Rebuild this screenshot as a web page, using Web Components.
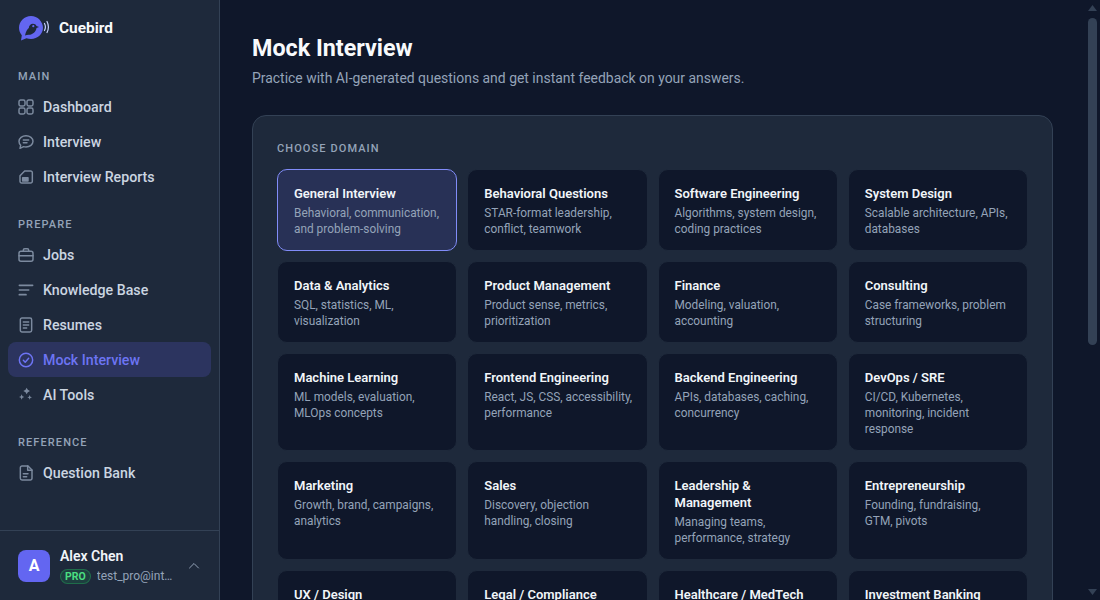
<!DOCTYPE html>
<html>
<head>
<meta charset="utf-8">
<title>Mock Interview</title>
<style>
  html, body { margin: 0; height: 100%; overflow: hidden; background: #0f172a; }
  body { font-family: Roboto, "Noto Sans", sans-serif; }
</style>
</head>
<body>
<app-shell>
  <side-bar slot="side"></side-bar>
  <mock-page slot="main"></mock-page>
  <page-scrollbar slot="bar"></page-scrollbar>
</app-shell>

<script>
const icons = {
  dashboard: '<rect x="1.500" y="1.500" width="9" height="9" rx="2.500"/><rect x="13.500" y="1.500" width="9" height="9" rx="2.500"/><rect x="1.500" y="13.500" width="9" height="9" rx="2.500"/><rect x="13.500" y="13.500" width="9" height="9" rx="2.500"/>',
  chat: '<path d="M12 2.500c5.800 0 10.500 3.800 10.500 8.500S17.800 19.500 12 19.500c-1.300 0-2.500-.2-3.600-.5L3 21.500l1-4.500C2.300 15.400 1.500 13.300 1.500 11 1.500 6.300 6.200 2.500 12 2.500z"/><path d="M8 9h8M8 13h5.500"/>',
  reports: '<path d="M10 3h9a2.500 2.500 0 0 1 2.500 2.500v13A2.500 2.500 0 0 1 19 21H5.500A2.500 2.500 0 0 1 3 18.500V10z"/><path d="M7 13h8v5H7z" fill="currentColor"/>',
  jobs: '<rect x="1.500" y="6.500" width="21" height="15" rx="3"/><path d="M8 6.500V4.500a2 2 0 0 1 2-2h4a2 2 0 0 1 2 2v2M1.500 13h21"/>',
  knowledge: '<path d="M2 5h20M2 12h14M2 19h10" stroke-width="2.500"/>',
  resumes: '<rect x="3.500" y="1.500" width="17" height="21" rx="2.500"/><path d="M8 7.500h8M8 12h8M8 16.500h5"/>',
  mock: '<circle cx="12" cy="12" r="10"/><path d="M8 12.500l2.800 2.800L16 9.500"/>',
  tools: '<path d="M13 1l1.700 3.300L18 6l-3.300 1.700L13 11l-1.700-3.300L8 6l3.300-1.700z" fill="currentColor" stroke="none"/><path d="M5.500 11l1.200 2.800 2.800 1.200-2.800 1.200L5.500 19l-1.200-2.800L1.500 15l2.800-1.200z" fill="currentColor" stroke="none"/><path d="M17.500 12l1 2.500 2.500 1-2.500 1-1 2.500-1-2.500-2.500-1 2.500-1z" fill="currentColor" stroke="none"/>',
  bank: '<path d="M3.500 4a2.500 2.500 0 0 1 2.500-2.500h9l6 6V20a2.500 2.500 0 0 1-2.500 2.500H6A2.500 2.500 0 0 1 3.500 20z"/><path d="M14.500 1.500V8H21M8 13h7M8 17.500h5"/>'
};

class AppShell extends HTMLElement {
  connectedCallback() {
    this.attachShadow({ mode: 'open' });
    this.shadowRoot.innerHTML = `
      <style>
        :host { display: flex; height: 600px; width: 1100px; }
        .side { flex: 0 0 220px; min-width: 0; height: 100%; }
        .main { flex: 1; min-width: 0; height: 100%; overflow: hidden; }
        .bar { flex: 0 0 15px; height: 100%; }
      </style>
      <div class="side"><slot name="side"></slot></div>
      <div class="main"><slot name="main"></slot></div>
      <div class="bar"><slot name="bar"></slot></div>
    `;
  }
}
customElements.define('app-shell', AppShell);

// headless browser hides real scrollbars, so this one is drawn
class PageScrollbar extends HTMLElement {
  connectedCallback() {
    this.attachShadow({ mode: 'open' });
    this.shadowRoot.innerHTML = `
      <style>
        :host { display: flex; flex-direction: column; align-items: center; height: 100%; background: #0f172a; }
        svg { width: 9px; height: 6px; flex: none; fill: #334155; }
        .up { margin-top: 5px; }
        .down { margin-bottom: 5px; margin-top: auto; }
        .thumb { width: 9px; height: 327px; margin-top: 7px; border-radius: 5px; background: #334155; }
      </style>
      <svg class="up" viewBox="0 0 9 6"><path d="M0 6h9L4.500 0z"/></svg>
      <div class="thumb"></div>
      <svg class="down" viewBox="0 0 9 6"><path d="M0 0h9L4.500 6z"/></svg>
    `;
  }
}
customElements.define('page-scrollbar', PageScrollbar);

class NavItem extends HTMLElement {
  connectedCallback() {
    const active = this.hasAttribute('active');
    const tone = active ? '#6d74f4' : '#94a3b8';
    this.attachShadow({ mode: 'open' });
    this.shadowRoot.innerHTML = `
      <style>
        :host { display: flex; align-items: center; gap: 9px; height: 35px; padding: 0 10px;
          border-radius: 8px; font-size: 14.2px; font-weight: 500; color: ${active ? '#6d74f4' : '#cbd5e1'};
          background: ${active ? 'rgba(99,102,241,.2)' : 'transparent'}; }
        svg { width: 16px; height: 16px; flex: none; fill: none; stroke: ${tone}; color: ${tone};
          opacity: ${active ? 1 : .8}; stroke-width: 2.2; stroke-linecap: round; stroke-linejoin: round; }
      </style>
      <svg viewBox="0 0 24 24">${icons[this.getAttribute('icon')]}</svg>
      <slot></slot>
    `;
  }
}
customElements.define('nav-item', NavItem);

class NavGroup extends HTMLElement {
  connectedCallback() {
    this.attachShadow({ mode: 'open' });
    this.shadowRoot.innerHTML = `
      <style>
        :host { display: block; padding: 0 8px; margin-bottom: 22px; }
        .label { font-size: 11px; font-weight: 500; letter-spacing: 1.1px; color: #94a3b8;
          padding: 1px 10px 0; height: 15px; line-height: 16px; margin-bottom: 5px; }
      </style>
      <div class="label">${this.getAttribute('label')}</div>
      <slot></slot>
    `;
  }
}
customElements.define('nav-group', NavGroup);

class UserCard extends HTMLElement {
  connectedCallback() {
    this.attachShadow({ mode: 'open' });
    this.shadowRoot.innerHTML = `
      <style>
        :host { display: flex; align-items: center; height: 70px; box-sizing: border-box; flex: none;
          border-top: 1px solid #334155; padding: 0 18px; gap: 10px; }
        .avatar { width: 32px; height: 32px; border-radius: 8px; background: #6366f1; color: #fff;
          font-weight: 700; font-size: 16px; display: flex; align-items: center; justify-content: center; flex: none; }
        .info { width: 118px; min-width: 0; }
        .name { font-size: 14px; font-weight: 600; color: #f1f5f9; line-height: 18px; }
        .meta { display: flex; align-items: center; gap: 6px; height: 16px; margin-top: 3px; }
        .pro { font-size: 10.5px; font-weight: 700; color: #4ade80; background: rgba(34,197,94,.15);
          border: 1px solid rgba(34,197,94,.35); border-radius: 8px; padding: 0 4px; line-height: 13px; flex: none; }
        .mail { font-size: 12px; color: #94a3b8; white-space: nowrap; overflow: hidden; text-overflow: ellipsis; min-width: 0; }
        svg { width: 12px; height: 12px; fill: none; stroke: #94a3b8; stroke-width: 2; stroke-linecap: round; stroke-linejoin: round; flex: none; }
      </style>
      <div class="avatar">A</div>
      <div class="info">
        <div class="name">Alex Chen</div>
        <div class="meta"><span class="pro">PRO</span><span class="mail">test_pro@interview.ai</span></div>
      </div>
      <svg viewBox="0 0 24 24"><path d="M3 16l9-9 9 9"/></svg>
    `;
  }
}
customElements.define('user-card', UserCard);

class SideBar extends HTMLElement {
  connectedCallback() {
    this.attachShadow({ mode: 'open' });
    this.shadowRoot.innerHTML = `
      <style>
        :host { display: flex; flex-direction: column; height: 100%; box-sizing: border-box;
          background: #1e293b; border-right: 1px solid #334155; }
        .brand { display: flex; align-items: center; gap: 9px; height: 56px; padding: 0 18px; flex: none;
          font-size: 15.4px; font-weight: 700; color: #f8fafc; margin-bottom: 12px; }
        .brand svg { width: 32px; height: 26px; flex: none; }
        nav { flex: 1; min-height: 0; }
      </style>
      <div class="brand">
        <svg viewBox="0 0 32 26">
          <path d="M13 1C6.400 1 1 6.300 1 12.800c0 2.800 1 5.400 2.800 7.400L3 25.500l5.400-2.300c1.400.5 3 .8 4.600.8 6.600 0 12-5.100 12-11.200S19.600 1 13 1z" fill="#6366f1"/>
          <path d="M7 20.500c1-4.200 2-6 3.800-7.500.2-2.400 1.800-4.200 4.200-4.200 1.600 0 2.900.9 3.500 2.200l2.500 1-2.500 1c-.3 3.700-3.700 6.800-7.800 6.800-1.300 0-2.600.3-3.700.7z" fill="#1e293b"/>
          <circle cx="15.300" cy="11.200" r="1.100" fill="#6366f1"/>
          <path d="M26.500 8.500c1.200 2.300 1.200 4.700 0 7M29 6.500c1.800 3.500 1.800 7.500 0 11" fill="none" stroke="#c7d2fe" stroke-width="1.200" stroke-linecap="round"/>
        </svg>
        <span>Cuebird</span>
      </div>
      <nav>
        <nav-group label="MAIN">
          <nav-item icon="dashboard">Dashboard</nav-item>
          <nav-item icon="chat">Interview</nav-item>
          <nav-item icon="reports">Interview Reports</nav-item>
        </nav-group>
        <nav-group label="PREPARE">
          <nav-item icon="jobs">Jobs</nav-item>
          <nav-item icon="knowledge">Knowledge Base</nav-item>
          <nav-item icon="resumes">Resumes</nav-item>
          <nav-item icon="mock" active>Mock Interview</nav-item>
          <nav-item icon="tools">AI Tools</nav-item>
        </nav-group>
        <nav-group label="REFERENCE">
          <nav-item icon="bank">Question Bank</nav-item>
        </nav-group>
      </nav>
      <user-card></user-card>
    `;
  }
}
customElements.define('side-bar', SideBar);

class DomainCard extends HTMLElement {
  connectedCallback() {
    const sel = this.hasAttribute('selected');
    this.attachShadow({ mode: 'open' });
    this.shadowRoot.innerHTML = `
      <style>
        :host { display: block; box-sizing: border-box; padding: 15px 12px 13px 16px; border-radius: 10px;
          background: ${sel ? 'rgba(99,102,241,.15)' : '#0f172a'};
          border: 1px solid ${sel ? '#818cf8' : '#1e293b'}; }
        .t { font-size: 13px; font-weight: 600; color: #f1f5f9; line-height: 17px; margin-bottom: 3px; }
        .d { font-size: 11.85px; color: #94a3b8; line-height: 16px; }
      </style>
      <div class="t">${this.getAttribute('title')}</div>
      <div class="d"><slot></slot></div>
    `;
  }
}
customElements.define('domain-card', DomainCard);

const domains = [
  ['General Interview', 'Behavioral, communication, and problem-solving'],
  ['Behavioral Questions', 'STAR-format leadership, conflict, teamwork'],
  ['Software Engineering', 'Algorithms, system design, coding practices'],
  ['System Design', 'Scalable architecture, APIs, databases'],
  ['Data &amp; Analytics', 'SQL, statistics, ML, visualization'],
  ['Product Management', 'Product sense, metrics, prioritization'],
  ['Finance', 'Modeling, valuation, accounting'],
  ['Consulting', 'Case frameworks, problem structuring'],
  ['Machine Learning', 'ML models, evaluation, MLOps concepts'],
  ['Frontend Engineering', 'React, JS, CSS, accessibility, performance'],
  ['Backend Engineering', 'APIs, databases, caching, concurrency'],
  ['DevOps / SRE', 'CI/CD, Kubernetes, monitoring, incident response'],
  ['Marketing', 'Growth, brand, campaigns, analytics'],
  ['Sales', 'Discovery, objection handling, closing'],
  ['Leadership &amp;<br>Management', 'Managing teams, performance, strategy'],
  ['Entrepreneurship', 'Founding, fundraising,<br>GTM, pivots'],
  ['UX / Design', ''],
  ['Legal / Compliance', ''],
  ['Healthcare / MedTech', ''],
  ['Investment Banking', '']
];

class MockPage extends HTMLElement {
  connectedCallback() {
    this.attachShadow({ mode: 'open' });
    const cards = domains.map((d, i) =>
      `<domain-card title="${d[0].replace(/</g, '&lt;')}"${i === 0 ? ' selected' : ''}>${d[1]}</domain-card>`).join('');
    this.shadowRoot.innerHTML = `
      <style>
        :host { display: block; height: 100%; overflow: hidden; background: #0f172a; }
        .wrap { padding: 31px 32px 32px; }
        h1 { margin: 0; font-size: 23.3px; font-weight: 700; color: #f8fafc; line-height: 34px; }
        .sub { margin: 2px 0 0; font-size: 13.95px; color: #94a3b8; line-height: 22px; }
        .panel { margin-top: 26px; background: #1e293b; border: 1px solid #334155; border-radius: 14px; padding: 24px; }
        .label { font-size: 11px; font-weight: 500; letter-spacing: 1.1px; color: #94a3b8; line-height: 16px;
          padding-top: 1px; margin-bottom: 12px; }
        .grid { display: grid; grid-template-columns: repeat(4, 1fr); gap: 10px; }
      </style>
      <div class="wrap">
        <h1>Mock Interview</h1>
        <p class="sub">Practice with AI-generated questions and get instant feedback on your answers.</p>
        <div class="panel">
          <div class="label">CHOOSE DOMAIN</div>
          <div class="grid">${cards}</div>
        </div>
      </div>
    `;
  }
}
customElements.define('mock-page', MockPage);
</script>
</body>
</html>
